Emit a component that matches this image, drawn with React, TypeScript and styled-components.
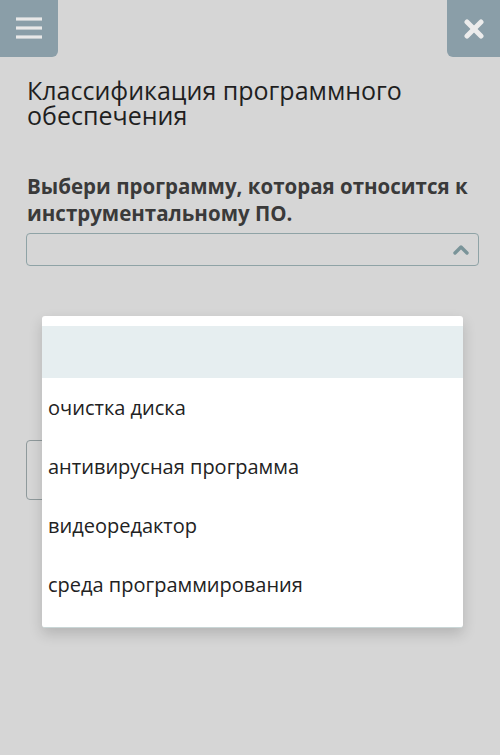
import styled, { createGlobalStyle } from "styled-components";

const GlobalStyle = createGlobalStyle`
  html, body {
    margin: 0;
    padding: 0;
    background: #d6d6d6;
  }
  body {
    font-family: "Open Sans", "Liberation Sans", sans-serif;
    color: #222;
  }
`;

const Page = styled.div`
  position: relative;
  width: 500px;
  height: 755px;
  background: #d6d6d6;
  overflow: hidden;
`;

const TopBar = styled.div`
  display: flex;
  justify-content: space-between;
  align-items: flex-start;
  height: 57px;
`;

const NavButton = styled.button<{ $side: "left" | "right" }>`
  display: flex;
  align-items: center;
  justify-content: center;
  width: ${(p) => (p.$side === "left" ? "58px" : "53px")};
  height: 57px;
  padding: 0;
  border: none;
  background: #8a9ea8;
  border-radius: ${(p) => (p.$side === "left" ? "0 0 6px 0" : "0 0 0 6px")};
`;

const Content = styled.div`
  padding: 0 21px 0 26px;
`;

const Title = styled.h1`
  margin: 21px 0 0 1px;
  font-size: 25px;
  font-weight: 400;
  line-height: 25px;
  color: #1f1f1f;
`;

const Question = styled.p`
  margin: 45px 0 0 1px;
  font-size: 20.5px;
  font-weight: 700;
  line-height: 27px;
  color: #3a3a3a;
`;

const Select = styled.div`
  display: flex;
  align-items: center;
  justify-content: flex-end;
  height: 31px;
  margin-top: 6px;
  padding-right: 9px;
  border: 1px solid #8fa3a6;
  border-radius: 4px;
`;

const CheckButton = styled.button`
  display: block;
  width: 150px;
  height: 60px;
  margin-top: 174px;
  border: 1px solid #8f9a9c;
  border-radius: 4px;
  background: #d6d6d6;
`;

const Menu = styled.ul`
  position: absolute;
  left: 42px;
  top: 316px;
  width: 421px;
  margin: 0;
  padding: 10px 0 13px;
  list-style: none;
  background: #fff;
  border-radius: 3px;
  border-bottom: 1px solid #c9d6d6;
  box-shadow: 0 6px 14px rgba(0, 0, 0, 0.16);
`;

const MenuItem = styled.li<{ $active?: boolean }>`
  display: flex;
  align-items: center;
  height: ${(p) => (p.$active ? "52px" : "59px")};
  padding-left: 6px;
  font-size: 20px;
  color: #222;
  background: ${(p) => (p.$active ? "#e6eef0" : "transparent")};
`;

const options = [
  "очистка диска",
  "антивирусная программа",
  "видеоредактор",
  "среда программирования",
];

export default function App() {
  return (
    <Page>
      <GlobalStyle />
      <TopBar>
        <NavButton $side="left" aria-label="Меню">
          <svg width="26" height="24" viewBox="0 0 26 24">
            <g stroke="#e8e8e8" strokeWidth="3.2">
              <line x1="0" y1="2" x2="26" y2="2" />
              <line x1="0" y1="11" x2="26" y2="11" />
              <line x1="0" y1="20" x2="26" y2="20" />
            </g>
          </svg>
        </NavButton>
        <NavButton $side="right" aria-label="Закрыть">
          <svg width="20" height="20" viewBox="0 0 20 20">
            <g stroke="#ececec" strokeWidth="5" strokeLinecap="round">
              <line x1="3" y1="3" x2="17" y2="17" />
              <line x1="17" y1="3" x2="3" y2="17" />
            </g>
          </svg>
        </NavButton>
      </TopBar>
      <Content>
        <Title>Классификация программного обеспечения</Title>
        <Question>Выбери программу, которая относится к инструментальному ПО.</Question>
        <Select>
          <svg width="16" height="11" viewBox="0 0 16 11">
            <path d="M2 9 L8 3 L14 9" fill="none" stroke="#7a9499" strokeWidth="3.4" strokeLinecap="round" strokeLinejoin="round" />
          </svg>
        </Select>
        <CheckButton />
      </Content>
      <Menu>
        <MenuItem $active />
        {options.map((o) => (
          <MenuItem key={o}>{o}</MenuItem>
        ))}
      </Menu>
    </Page>
  );
}
